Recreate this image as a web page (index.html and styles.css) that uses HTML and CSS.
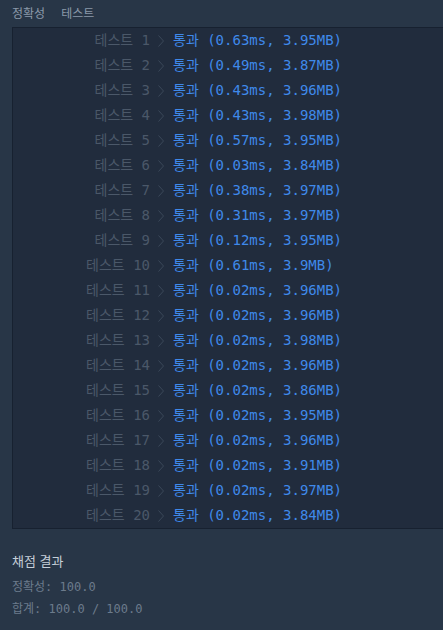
FILE: index.html
```html
<!DOCTYPE html>
<html lang="ko">
<head>
    <meta charset="UTF-8" />
    <meta name="viewport" content="width=device-width, initial-scale=1.0" />
    <title>채점 결과</title>
    <link rel="stylesheet" href="styles.css">
</head>
<body>

    <div class="page">
        <nav class="tabs">
            <span class="tab">정확성</span>
            <span class="tab">테스트</span>
        </nav>

        <section class="console" id="test-results"></section>

        <section class="summary">
            <h4>채점 결과</h4>
            <p>정확성: 100.0</p>
            <p>합계: 100.0 / 100.0</p>
        </section>
    </div>

    <script>
        const results = [
            ['0.63ms', '3.95MB'], ['0.49ms', '3.87MB'], ['0.43ms', '3.96MB'], ['0.43ms', '3.98MB'],
            ['0.57ms', '3.95MB'], ['0.03ms', '3.84MB'], ['0.38ms', '3.97MB'], ['0.31ms', '3.97MB'],
            ['0.12ms', '3.95MB'], ['0.61ms', '3.9MB'], ['0.02ms', '3.96MB'], ['0.02ms', '3.96MB'],
            ['0.02ms', '3.98MB'], ['0.02ms', '3.96MB'], ['0.02ms', '3.86MB'], ['0.02ms', '3.95MB'],
            ['0.02ms', '3.96MB'], ['0.02ms', '3.91MB'], ['0.02ms', '3.97MB'], ['0.02ms', '3.84MB']
        ];

        const chevron = '<svg class="chevron" width="6" height="12" viewBox="0 0 6 12"><path d="M0.5 0.5 L5.5 6 L0.5 11.5" fill="none" stroke="currentColor" stroke-width="1"/></svg>';

        const box = document.getElementById('test-results');
        results.forEach((r, i) => {
            const row = document.createElement('div');
            row.className = 'test-row';
            row.innerHTML =
                '<span class="label">테스트 ' + (i + 1) + '</span>' + chevron +
                '<span class="result passed">통과 (' + r[0] + ', ' + r[1] + ')</span>';
            box.appendChild(row);
        });
    </script>

</body>
</html>
```

FILE: styles.css
```css
html, body {
    margin: 0;
    padding: 0;
    background: #283647;
}

body {
    font-family: 'Noto Sans CJK KR', sans-serif;
    color: #8a98a8;
}

.page {
    padding: 0 0 0 12px;
}

.tabs {
    display: flex;
    gap: 16px;
    height: 27px;
    line-height: 26px;
    font-size: 12px;
}

.tab {
    color: #8b99aa;
}

/* runs off the right edge in the original, so no right border */
.console {
    background: #212c3d;
    border: 1px solid #172130;
    border-right: none;
    font-family: 'DejaVu Sans Mono', 'Noto Sans CJK KR', monospace;
    font-size: 14px;
}

.test-row {
    display: flex;
    align-items: center;
    height: 25px;
    line-height: 25px;
    white-space: pre;
}

.test-row .label {
    width: 137px;
    text-align: right;
    color: #4b5869;
}

.test-row .chevron {
    margin: 0 9px 0 8px;
    color: #3a4759;
}

.result.passed {
    color: #3f89ea;
}

.summary {
    margin-top: 22px;
}

.summary h4 {
    margin: 0 0 6px;
    font-size: 13px;
    font-weight: 400;
    line-height: 20px;
    color: #c6cfd9;
}

.summary p {
    margin: 0;
    font-family: 'DejaVu Sans Mono', 'Noto Sans CJK KR', monospace;
    font-size: 12px;
    line-height: 21.5px;
    color: #6c7b8c;
}
```
